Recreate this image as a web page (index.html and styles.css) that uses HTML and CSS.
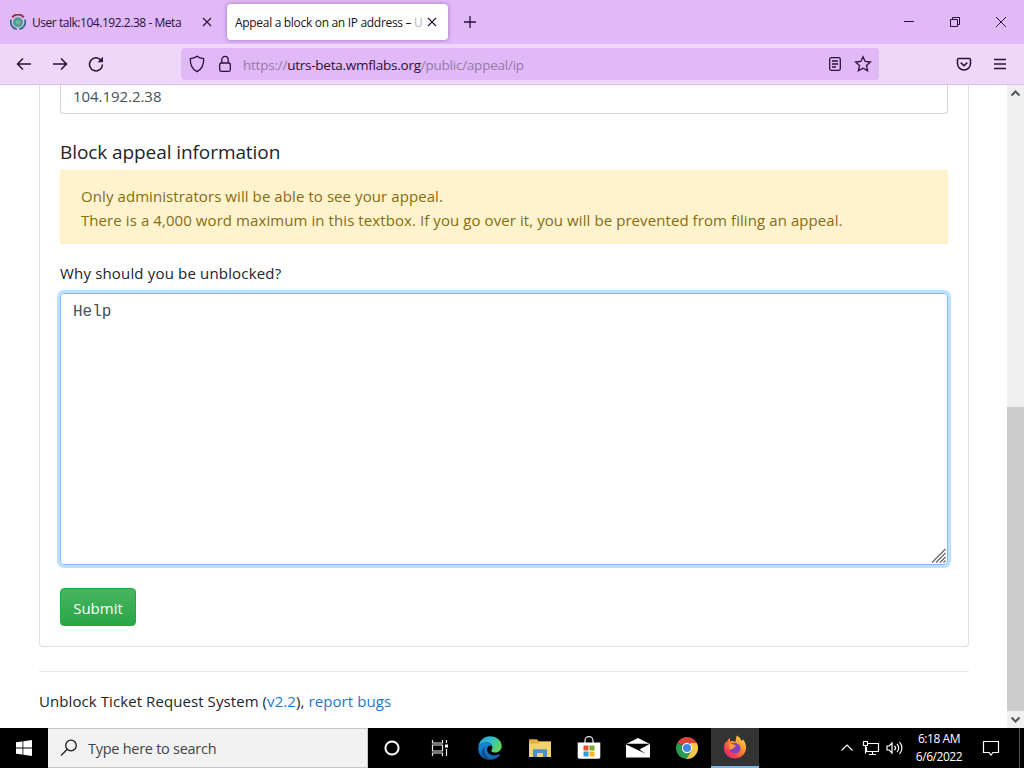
FILE: index.html
```html
<!DOCTYPE html>
<html lang="en">
<head>
  <meta charset="UTF-8">
  <meta name="viewport" content="width=device-width, initial-scale=1.0">
  <title>Appeal a block on an IP address – UTRS</title>
  <link rel="stylesheet" href="styles.css">
</head>
<body>
  <div class="tabbar">
    <div class="tab">
      <svg class="favicon" width="16" height="16" viewBox="0 0 16 16" fill="none">
        <circle cx="8" cy="8.3" r="5" fill="#4f9c8c"/>
        <circle cx="8" cy="8.3" r="2.2" fill="#75b3a0"/>
        <path d="M2.2 3.4a7.4 7.4 0 0 1 11.6 0" stroke="#963043" stroke-width="2"/>
        <path d="M1.1 5.6a7.2 7.2 0 0 0 5.7 9.5M14.9 5.6a7.2 7.2 0 0 1-5.7 9.5" stroke="#286d83" stroke-width="1.8"/>
      </svg>
      <span class="tab-title tab-title-meta">User talk:104.192.2.38 - Meta</span>
      <svg class="tab-close" width="10" height="10" viewBox="0 0 10 10"><path d="M1 1l8 8M9 1L1 9"/></svg>
    </div>
    <div class="tab tab-active">
      <span class="tab-title tab-title-appeal">Appeal a block on an IP address – <span class="fade">U</span></span>
      <svg class="tab-close" width="10" height="10" viewBox="0 0 10 10"><path d="M1 1l8 8M9 1L1 9"/></svg>
    </div>
    <svg class="new-tab" width="12" height="12" viewBox="0 0 12 12"><path d="M6 0v12M0 6h12"/></svg>
    <div class="window-buttons">
      <svg width="12" height="12" viewBox="0 0 12 12"><path d="M1 5.5h10"/></svg>
      <svg width="12" height="12" viewBox="0 0 12 12"><path d="M1.5 3.5h7v7h-7zM3.5 3.5v-2h7v7h-2"/></svg>
      <svg width="12" height="12" viewBox="0 0 12 12"><path d="M1 1l10 10M11 1L1 11"/></svg>
    </div>
  </div>

  <div class="toolbar">
    <div class="nav-buttons">
      <svg width="16" height="16" viewBox="0 0 16 16"><path d="M15 8H1.5M7 2.5L1.5 8 7 13.5"/></svg>
      <svg width="16" height="16" viewBox="0 0 16 16"><path d="M1 8h13.500M9 2.500L14.500 8 9 13.500"/></svg>
      <svg width="16" height="16" viewBox="0 0 16 16"><path d="M13 4.200A6.500 6.500 0 1 0 14.500 8.500"/><path class="solid" d="M15 .8v5.500h-5.500z"/></svg>
    </div>
    <div class="urlbar">
      <svg width="16" height="18" viewBox="0 0 16 18"><path d="M8 1.200C6 2.800 3.700 3.500 1.300 3.700c-.2 6 1.500 10.300 6.700 13 5.200-2.700 6.900-7 6.700-13C12.300 3.500 10 2.800 8 1.200z"/></svg>
      <svg class="lock" width="14" height="18" viewBox="0 0 14 18"><rect x="1.700" y="8" width="10.600" height="8.300" rx="1.500"/><path d="M3.800 8V4.600a3.200 3.200 0 0 1 6.400 0V8"/></svg>
      <span class="url">https://<b>utrs-beta.wmflabs.org</b>/public/appeal/ip</span>
      <svg class="reader" width="14" height="16" viewBox="0 0 14 16"><rect x="1.700" y="1.700" width="10.600" height="12.600" rx="1.500"/><path d="M4 5h6M4 8h6M4 11h4"/></svg>
      <svg width="18" height="18" viewBox="0 0 18 18"><path d="M9 1.700l2.200 4.800 5.200.6-3.900 3.500 1.100 5.200L9 13.200l-4.600 2.600 1.100-5.200-3.900-3.500 5.200-.6z"/></svg>
    </div>
    <div class="menu-buttons">
      <svg width="16" height="16" viewBox="0 0 16 16"><path d="M2.800 2.500h10.400c.8 0 1.300.5 1.300 1.300v3.700a6.500 6.500 0 0 1-13 0V3.800c0-.8.500-1.300 1.300-1.300zM4.700 6.600L8 9.700l3.300-3.100"/></svg>
      <svg width="14" height="14" viewBox="0 0 14 14"><path d="M1 2.500h12M1 7h12M1 11.500h12"/></svg>
    </div>
  </div>

  <div class="viewport">
    <div class="page">
      <div class="card">
        <div class="ip-field">104.192.2.38</div>
        <h5>Block appeal information</h5>
        <div class="alert">
          Only administrators will be able to see your appeal.<br>
          There is a 4,000 word maximum in this textbox. If you go over it, you will be prevented from filing an appeal.
        </div>
        <label for="appealtext">Why should you be unblocked?</label>
        <div class="textarea" id="appealtext">
          Help
          <svg class="grip" width="15" height="15" viewBox="0 0 15 15"><path d="M1 14.500L14.500 1M5 14.500l9.500-9.500M9 14.500l5.500-5.500M12.500 14.500l2-2"/></svg>
        </div>
        <button class="btn">Submit</button>
      </div>
      <hr>
      <p class="footer">Unblock Ticket Request System (<a>v2.2</a>), <a>report bugs</a></p>
    </div>
    <div class="scrollbar">
      <svg width="17" height="17" viewBox="0 0 17 17"><path d="M4.500 10.500l4-4 4 4"/></svg>
      <div class="thumb"></div>
      <svg width="17" height="17" viewBox="0 0 17 17"><path d="M4.500 6.500l4 4 4-4"/></svg>
    </div>
  </div>

  <div class="taskbar">
    <div class="start">
      <svg width="16" height="16" viewBox="0 0 16 16" fill="#fff"><path d="M0 2.300L6.500 1.400v6.200H0zM7.300 1.300L16 0v7.600H7.300zM0 8.400h6.500v6.200L0 13.700zM7.300 8.400H16V16l-8.700-1.300z"/></svg>
    </div>
    <div class="search">
      <svg width="18" height="18" viewBox="0 0 18 18" fill="none" stroke="#1c1c1c" stroke-width="1.300"><circle cx="11" cy="6.500" r="5.300"/><path d="M7.300 10.300L1 16.500"/></svg>
      <span>Type here to search</span>
    </div>
    <div class="apps">
      <div class="app app-system">
        <svg width="18" height="18" viewBox="0 0 18 18" fill="none" stroke="#fff" stroke-width="2"><circle cx="9" cy="9" r="6.600"/></svg>
      </div>
      <div class="app app-system">
        <svg width="18" height="16" viewBox="0 0 18 16" fill="none" stroke="#e8e8e8" stroke-width="1.200"><path d="M1.500 0v3h10V0M1.500 16v-3h10v3M1.500 5h10v6h-10zM15.500 0v3M15.500 9v7"/><path d="M14 4.500h3v3h-3z" fill="#fff" stroke="none"/></svg>
      </div>
      <div class="app app-edge">
        <svg width="24" height="24" viewBox="0 0 24 24">
          <defs>
            <linearGradient id="edge-top" x1="0" y1="0" x2="1" y2=".5"><stop offset="0" stop-color="#249bd8"/><stop offset=".5" stop-color="#31bdd0"/><stop offset="1" stop-color="#5cd75b"/></linearGradient>
            <linearGradient id="edge-base" x1="0" y1="0" x2="0" y2="1"><stop offset="0" stop-color="#1589d9"/><stop offset="1" stop-color="#1261ac"/></linearGradient>
          </defs>
          <path d="M.3 11C1 4.500 6 .3 12 .3c6.700 0 11.700 4.500 11.700 9.700 0 4-3 6.500-6.300 6.500-2.400 0-4.200-.8-4.200-1.800 0-.7 1.200-1.200 1.200-3.200C14.400 8.600 12 6.500 8.500 6.500 5 6.500 1.800 8.300.3 11z" fill="url(#edge-top)"/>
          <path d="M.3 12C1 8.700 4.500 6.500 8.500 6.500c3 0 5.300 1.500 5.800 3.800-1-1-3-1-4.300.5-2.600 3 .2 8.500 6 8.500 2.300 0 4-.6 5.300-1.300.6-.3 1 .1.600.7C19.700 22 16 23.800 12 23.800 5 23.800-.3 18.500.3 12z" fill="url(#edge-base)"/>
          <path d="M7.400 10.500c-3 5 .5 12 7 13-5 1-9.700-2-10.100-6.800-.2-2.600 1-5 3.100-6.200z" fill="#0e4787"/>
        </svg>
      </div>
      <div class="app">
        <svg width="22" height="19" viewBox="0 0 22 19">
          <path d="M0 1.500C0 .7.500.3 1.300.3h6.500l2 2H22V18H0z" fill="#e3ae3c"/>
          <path d="M0 4.500h9l2-1.500h11v15H0z" fill="#f0d272"/>
          <path d="M4 18v-6.500c0-.8.500-1.300 1.300-1.300h11.400c.8 0 1.300.5 1.300 1.300V18h-4v-4H8v4z" fill="#4a91c9"/>
        </svg>
      </div>
      <div class="app">
        <svg width="24" height="24" viewBox="0 0 24 24">
          <path d="M8 8V4.500a4 4 0 0 1 8 0V8" fill="none" stroke="#ddd" stroke-width="1.300"/>
          <path d="M.7 6.500h22.600V21c0 1-.7 1.700-1.700 1.700H2.400c-1 0-1.700-.7-1.700-1.700z" fill="#fff"/>
          <path d="M6.500 9.500h5v5h-5z" fill="#e2512c"/><path d="M12.500 9.500h5v5h-5z" fill="#75ad24"/>
          <path d="M6.500 15.500h5v5h-5z" fill="#289edb"/><path d="M12.500 15.500h5v5h-5z" fill="#f5b51c"/>
        </svg>
      </div>
      <div class="app">
        <svg width="24" height="20" viewBox="0 0 24 20">
          <path d="M0 6L12 0l12 6v13.500H0z" fill="#fff"/>
          <path d="M0 5.800h24L13.500 11.500l6.200 4.300L0 6.600z" fill="#000"/>
        </svg>
      </div>
      <div class="app">
        <svg width="22" height="22" viewBox="0 0 22 22">
          <path d="M11 11L1.500 5.500A11 11 0 0 1 20.500 5.500L21 6H11z" fill="#dc4437"/>
          <path d="M1.500 5.500A11 11 0 0 0 11 22l4.500-8.500L11 11z" fill="#289b50"/>
          <path d="M20.500 5.500A11 11 0 0 1 10.500 22l5-8.500L14 6h6.800z" fill="#f6c944"/>
          <circle cx="11" cy="11" r="5.200" fill="#fff"/><circle cx="11" cy="11" r="4.100" fill="#4688e8"/>
        </svg>
      </div>
      <div class="app app-active">
        <svg width="24" height="24" viewBox="0 0 24 24">
          <defs>
            <linearGradient id="fox" x1="1" y1="0" x2=".2" y2="1"><stop offset="0" stop-color="#ffe34b"/><stop offset=".45" stop-color="#ff9432"/><stop offset=".8" stop-color="#f53d55"/><stop offset="1" stop-color="#dd2c82"/></linearGradient>
          </defs>
          <path d="M14 .5c3 1.800 4 4 4.500 5.500l1.700-1.500c2 2.500 3 5.500 2.800 8.800C22.700 19 18 23.500 12 23.500 5.800 23.500 1 19 1 13c0-3 1-5 2.300-7l.5 2C4.500 5.500 5.500 4 7 3v3.500c2-.8 4-.5 5.500.5.300-2.500.5-4.700 1.500-6.500z" fill="url(#fox)"/>
          <path d="M8 8.500c3-1.200 9-.5 9.500 4.500.3 3-2.300 5.500-5.500 5.500s-5.600-2.500-5-5c1 1 3 .5 4.500-.8L8.500 11z" fill="#8142bb"/>
          <path d="M6 8.500c2.500-.4 4 .5 5.500 1.500.8.500 1.500.8 1 1.500-.8 1-2.300.7-3 1.700-.8 1-1.500 1.300-3 .8z" fill="#ff9d35"/>
        </svg>
      </div>
    </div>
    <div class="tray">
      <svg width="14" height="10" viewBox="0 0 14 10"><path d="M1.500 7.500L7 2l5.500 5.500"/></svg>
      <svg class="network" width="18" height="16" viewBox="0 0 18 16"><path d="M5 3.500h11.500v8H4.500V7M1.500 1.500h4v4h-4zM3.500 5.500v8M10.500 11.500v3M7 14.500h7"/></svg>
      <svg class="volume" width="18" height="14" viewBox="0 0 18 14"><path d="M1 5h2.200L6 2v10L3.200 9H1zM8.500 4.800c1.200 1.200 1.200 3.200 0 4.400M11 3c2.200 2.200 2.200 5.800 0 8M13.500 1.200c3.200 3.200 3.200 8.400 0 11.600"/></svg>
      <div class="clock"><div>6:18 AM</div><div class="date">6/6/2022</div></div>
      <svg class="action" width="18" height="18" viewBox="0 0 18 18"><path d="M1.500 2.500h15v11H11L9 16l-2-2.500H1.500z"/></svg>
      <div class="show-desktop"></div>
    </div>
  </div>
</body>
</html>
```
FILE: styles.css
```css
* { box-sizing: border-box; }
body { margin: 0; width: 1024px; height: 768px; overflow: hidden; display: flex; flex-direction: column; background: #fff; color: #212529; font-family: "Open Sans", sans-serif; font-size: 15px; }
svg { display: block; flex: none; }

/* browser */
.tabbar, .toolbar { display: flex; align-items: center; flex: none; }
.tabbar svg, .toolbar svg { stroke: #2b103c; fill: none; stroke-width: 1.3; }
.tabbar { height: 44px; background: #e0b9f6; font-size: 12px; color: #2b103c; }
.tab { display: flex; align-items: center; height: 36px; width: 217px; padding: 0 5px 0 10px; }
.tabbar .favicon { stroke: none; margin-right: 6px; }
.tab-title { flex: 1; white-space: nowrap; }
.tab-title-meta { letter-spacing: -0.46px; }
.tab-title-appeal { letter-spacing: -0.31px; }
.tabbar .tab-close { stroke-width: 1.1; }
.tab-active { width: 221px; margin-left: 10px; padding: 0 11px 0 8px; background: #fff; border-radius: 4px; box-shadow: 0 0 4px rgba(80,20,110,0.45); color: #15141a; }
.fade { color: #b5b5b9; }
.new-tab { margin-left: 16px; }
.window-buttons { margin-left: auto; display: flex; gap: 34px; padding-right: 17px; }
.tabbar .window-buttons svg { stroke-width: 1; }

.toolbar { height: 41px; background: #efd7fa; border-bottom: 1px solid #d8c4e0; }
.nav-buttons { display: flex; gap: 20px; padding-left: 16px; width: 181px; }
.toolbar .nav-buttons svg, .toolbar .menu-buttons svg { stroke-width: 1.5; }
.toolbar .solid { fill: #2b103c; stroke: none; }
.urlbar { display: flex; align-items: center; width: 698px; height: 32px; padding: 0 7px 0 8px; background: #e0b9f6; border-radius: 4px; }
.lock { margin-left: 13px; }
.url { flex: 1; margin-left: 11px; padding-top: 1px; font-size: 13.5px; letter-spacing: -0.24px; color: #967aa6; }
.url b { font-weight: normal; color: #2b103c; }
.reader { margin-right: 12px; }
.menu-buttons { margin-left: auto; display: flex; align-items: center; gap: 21px; padding-right: 17px; }

/* page */
.viewport { flex: 1; display: flex; min-height: 0; letter-spacing: 0.08px; }
.page { flex: 1; padding: 0 38px 0 39px; }
.card { height: 562px; padding: 0 20px; border: 1px solid #dfdfdf; border-top: 0; border-radius: 0 0 4px 4px; }
.ip-field { height: 29px; padding-left: 12px; border: 1px solid #ced4da; border-top: 0; border-radius: 0 0 4px 4px; line-height: 22px; letter-spacing: -0.05px; color: #495057; }
h5 { margin: 26px 0 6px; font-size: 19px; font-weight: normal; line-height: 24px; letter-spacing: -0.08px; }
.alert { height: 74px; padding: 13px 20px; border: 1px solid #fff0c4; background: #fff3cd; color: #856c14; line-height: 24px; white-space: nowrap; }
label { display: block; margin: 17px 0 8px; line-height: 24px; letter-spacing: 0.17px; }
.textarea { position: relative; height: 272px; padding: 6px 12px; border: 1px solid #80bdff; border-radius: 4px; box-shadow: 0 0 0 3px #bfdfff; font-family: "Courier New", "Liberation Mono", monospace; font-size: 16px; line-height: 24px; letter-spacing: 0; color: #495057; }
.grip { position: absolute; right: 1px; bottom: 1px; fill: none; stroke: #666; stroke-width: 1.2; }
.btn { display: block; width: 76px; height: 38px; margin-top: 23px; padding: 2px 0 0; border: 1px solid #28a745; border-radius: 4px; background: linear-gradient(#48b461, #28a745); color: #fff; font-family: inherit; font-size: 15px; }
hr { margin: 24px 0 17px; border: 0; border-top: 1px solid #e8e8e8; }
.footer { margin: 0; line-height: 24px; }
a { color: #1b78cf; }

.scrollbar { width: 17px; background: #f0f0f0; display: flex; flex-direction: column; }
.scrollbar svg { fill: none; stroke: #555; stroke-width: 2; }
.thumb { height: 304px; margin-top: auto; background: #cdcdcd; }

/* taskbar */
.taskbar { flex: none; display: flex; height: 40px; background: #000; color: #fff; }
.start { width: 48px; display: flex; align-items: center; justify-content: center; }
.search { display: flex; align-items: center; width: 320px; padding-left: 12px; background: #f2f2f2; border: 1px solid #c8c8c8; border-left: 0; color: #444; font-size: 14.5px; letter-spacing: -0.27px; }
.search span { margin-left: 10px; }
.apps { display: flex; }
.app { width: 49px; height: 40px; display: flex; align-items: center; justify-content: center; }
.app-system { width: 48px; }
.app-edge { width: 51px; }
.app-active { width: 48px; background: #333; border-bottom: 2px solid #76b9ed; }
.tray { margin-left: auto; display: flex; align-items: center; }
.tray svg { fill: none; stroke: #fff; stroke-width: 1.2; }
.network { margin-left: 8px; }
.volume { margin-left: 6px; }
.clock { width: 60px; margin: 0 13px 0 5px; text-align: center; font-size: 12px; line-height: 18px; letter-spacing: -0.45px; }
.show-desktop { width: 5px; height: 40px; margin-left: 19px; border-left: 1px solid #555; }
```
